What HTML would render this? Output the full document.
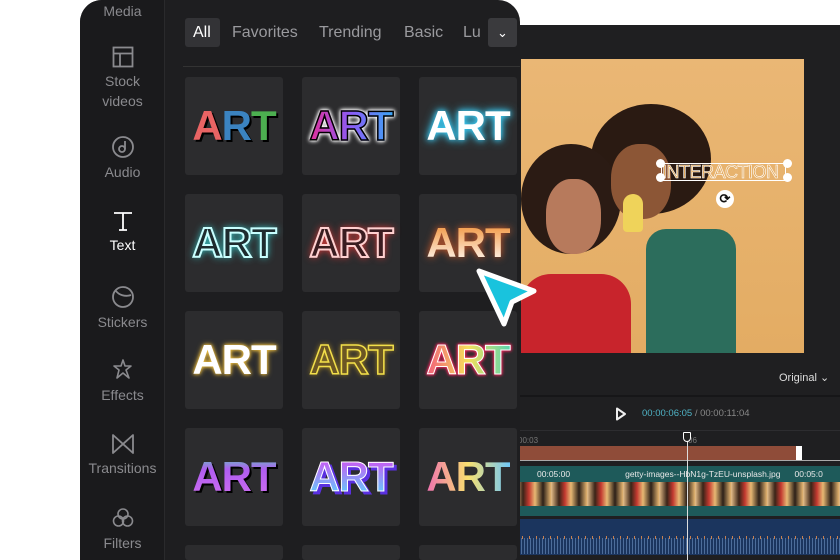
<!DOCTYPE html>
<html><head><meta charset="utf-8"><style>
*{margin:0;padding:0;box-sizing:border-box}
body{width:840px;height:560px;overflow:hidden;background:#fff;font-family:"Liberation Sans",sans-serif;position:relative}
.ed{position:absolute;left:500px;top:25px;width:340px;height:535px;background:#1f1f21}
.photo{position:absolute;left:521px;top:59px;width:283px;height:294px;background:linear-gradient(180deg,#eab775,#e3ac63);overflow:hidden}
.panel{position:absolute;left:80px;top:0;width:440px;height:560px;background:#1e1e20;border-radius:22px 22px 0 0;overflow:hidden}
.side{position:absolute;left:0;top:0;width:85px;height:560px;background:#1a1a1c;border-right:1px solid #2a2a2c}
.si{position:absolute;left:0;width:85px;text-align:center;color:#8a8a8e;font-size:14px;line-height:20px}
.si svg{display:block;margin:0 auto 3px}
.tabs{position:absolute;left:105px;top:18px;font-size:16px;color:#9a9a9e}
.tabs span{position:absolute;top:0;white-space:nowrap;line-height:29px}
.cell{position:absolute;width:98px;height:98px;background:#2c2c2e;border-radius:3px;text-align:center;font-weight:bold;font-size:42px;line-height:98px;font-family:"Liberation Sans",sans-serif;letter-spacing:-1px}
.g{-webkit-background-clip:text;background-clip:text;color:transparent}
</style></head><body>
<div class="ed"></div>
<div class="photo">
 <div style="position:absolute;left:70px;top:45px;width:120px;height:110px;border-radius:50%;background:#2a1a12"></div>
 <div style="position:absolute;left:0;top:85px;width:100px;height:110px;border-radius:50%;background:#2b1b14"></div>
 <div style="position:absolute;left:90px;top:85px;width:60px;height:75px;border-radius:45%;background:#8c5636"></div>
 <div style="position:absolute;left:25px;top:120px;width:55px;height:75px;border-radius:45%;background:#b77a5c"></div>
 <div style="position:absolute;left:125px;top:170px;width:90px;height:124px;background:#2c6d5c;border-radius:20px 20px 0 0"></div>
 <div style="position:absolute;left:0;top:215px;width:110px;height:80px;background:#c8242c;border-radius:30px 30px 0 0"></div>
 <div style="position:absolute;left:102px;top:135px;width:20px;height:38px;background:#efd35a;border-radius:10px 10px 4px 4px"></div>
 <div style="position:absolute;left:140px;top:104px;width:125px;height:18px;border:1px solid #fff;color:#e3a95c;font-size:18px;line-height:16px;-webkit-text-stroke:.6px #fff;letter-spacing:-0.5px">INTERACTION</div>
 <div style="position:absolute;left:135px;top:100px;width:9px;height:9px;border-radius:50%;background:#fff"></div>
 <div style="position:absolute;left:135px;top:114px;width:9px;height:9px;border-radius:50%;background:#fff"></div>
 <div style="position:absolute;left:262px;top:100px;width:9px;height:9px;border-radius:50%;background:#fff"></div>
 <div style="position:absolute;left:262px;top:114px;width:9px;height:9px;border-radius:50%;background:#fff"></div>
 <div style="position:absolute;left:195px;top:131px;width:18px;height:18px;border-radius:50%;background:#fff;color:#111;font-size:13px;text-align:center;line-height:18px;font-weight:bold">⟳</div>
</div>
<div style="position:absolute;left:779px;top:371px;color:#ddd;font-size:11px">Original ⌄</div>
<div style="position:absolute;left:500px;top:395px;width:340px;height:2px;background:#161618"></div>
<svg style="position:absolute;left:615px;top:407px" width="12" height="14"><path d="M2 1.5 L10 7 L2 12.5 Z" fill="none" stroke="#eee" stroke-width="2" stroke-linejoin="round"/></svg>
<div style="position:absolute;left:642px;top:408px;font-size:9.5px;color:#888"><span style="color:#4fb3c6">00:00:06:05</span> / 00:00:11:04</div>
<div style="position:absolute;left:500px;top:430px;width:340px;height:1px;background:#2d2d30"></div>
<div style="position:absolute;left:518px;top:436px;font-size:8px;color:#777">00:03</div>
<div style="position:absolute;left:688px;top:436px;font-size:8px;color:#777">06</div>
<div style="position:absolute;left:515px;top:446px;width:287px;height:14px;background:#8f4c39"></div>
<div style="position:absolute;left:796px;top:446px;width:6px;height:14px;background:#fff"></div>
<div style="position:absolute;left:515px;top:460px;width:325px;height:1px;background:#aaa"></div>
<div style="position:absolute;left:515px;top:466px;width:325px;height:50px;background:#1e5a5a"></div>
<div style="position:absolute;left:537px;top:469px;font-size:8.5px;color:#e8e8e8;white-space:nowrap">00:05:00<span style="margin-left:55px">getty-images--HbN1g-TzEU-unsplash.jpg</span><span style="margin-left:14px">00:05:0</span></div>
<div style="position:absolute;left:515px;top:482px;width:325px;height:24px;background:repeating-linear-gradient(90deg,#e8c08a 0,#3a2418 8px,#c33a30 14px,#e7b873 20px,#2c2018 28px,#e4b470 36px)"></div>
<div style="position:absolute;left:515px;top:519px;width:325px;height:36px;background:#1b355e"></div>
<div style="position:absolute;left:515px;top:538px;width:325px;height:16px;background:repeating-linear-gradient(90deg,#4d6d9a 0,#4d6d9a 1px,transparent 1px,transparent 3px)"></div>
<div style="position:absolute;left:515px;top:536px;width:325px;height:3px;background:repeating-linear-gradient(90deg,#c88050 0,#c88050 1px,transparent 1px,transparent 7px)"></div>
<div style="position:absolute;left:687px;top:433px;width:1px;height:127px;background:#ddd"></div>
<div style="position:absolute;left:683px;top:432px;width:8px;height:10px;border:1.5px solid #fff;border-radius:1px 1px 4px 4px;background:#222"></div>

<div class="panel">
 <div class="side">
  <div class="si" style="top:1px;">Media</div>
  <div class="si" style="top:46px"><svg width="22" height="22"><rect x="1.5" y="1.5" width="19" height="19" fill="none" stroke="#8a8a8e" stroke-width="1.8"/><path d="M1.5 7.5H20.5M8 7.5V20.5" stroke="#8a8a8e" stroke-width="1.8"/></svg>Stock<br>videos</div>
  <div class="si" style="top:135px"><svg width="24" height="24"><circle cx="12" cy="12" r="10" fill="none" stroke="#8a8a8e" stroke-width="1.8"/><circle cx="11" cy="14" r="3" fill="none" stroke="#8a8a8e" stroke-width="1.8"/><path d="M14 14V6" stroke="#8a8a8e" stroke-width="1.8"/></svg>Audio</div>
  <div class="si" style="top:210px;color:#fff"><svg width="22" height="22"><path d="M2 3H20M11 3V20M7 20H15" stroke="#fff" stroke-width="1.8" fill="none"/></svg>Text</div>
  <div class="si" style="top:285px"><svg width="24" height="24"><circle cx="12" cy="12" r="10" fill="none" stroke="#8a8a8e" stroke-width="1.8"/><path d="M5 6 C8 10 14 12 20 10" stroke="#8a8a8e" stroke-width="1.8" fill="none"/></svg>Stickers</div>
  <div class="si" style="top:358px"><svg width="24" height="24"><path d="M12 2 L14 8 L20 8 L15 12 L18 20 L12 15 L6 20 L8 12 L3 8 L10 8 Z" fill="none" stroke="#8a8a8e" stroke-width="1.6" stroke-linejoin="round"/></svg>Effects</div>
  <div class="si" style="top:433px"><svg width="24" height="22"><path d="M2 2 L22 20 V2 L2 20 Z" fill="none" stroke="#8a8a8e" stroke-width="1.8" stroke-linejoin="round"/></svg>Transitions</div>
  <div class="si" style="top:506px"><svg width="24" height="24"><circle cx="12" cy="8" r="5" fill="none" stroke="#8a8a8e" stroke-width="1.6"/><circle cx="7.5" cy="15" r="5" fill="none" stroke="#8a8a8e" stroke-width="1.6"/><circle cx="16.5" cy="15" r="5" fill="none" stroke="#8a8a8e" stroke-width="1.6"/></svg>Filters</div>
 </div>
 <div style="position:absolute;left:105px;top:18px;width:35px;height:29px;background:#333336;border-radius:3px"></div>
 <div class="tabs"><span style="left:8px;color:#fff">All</span><span style="left:47px">Favorites</span><span style="left:134px">Trending</span><span style="left:219px">Basic</span><span style="left:278px">Lu</span></div>
 <div style="position:absolute;left:408px;top:18px;width:29px;height:29px;background:#3a3a3d;border-radius:3px;color:#fff;text-align:center;line-height:29px;font-size:13px">⌄</div>
 <div style="position:absolute;left:103px;top:66px;width:337px;height:1px;background:#333"></div>

 <div class="cell" style="left:105px;top:77px;text-shadow:2px 2px 0 #000"><span style="color:#e96464">A</span><span style="color:#3b83c0">R</span><span style="color:#4caf50">T</span></div>
 <div class="cell" style="left:222px;top:77px"><span class="g" style="background-image:linear-gradient(90deg,#e02f9a,#8b5cf6,#3aa5f5);-webkit-text-stroke:1.5px #000;filter:drop-shadow(0 0 2px #fff) drop-shadow(0 0 1px #fff)">ART</span></div>
 <div class="cell" style="left:339px;top:77px;color:#fff;text-shadow:0 0 6px #3cd4ff,0 0 10px #3cd4ff">ART</div>
 <div class="cell" style="left:105px;top:194px;color:#1e2b2e;-webkit-text-stroke:2px #c8ffff;text-shadow:0 0 8px #3be0e0">ART</div>
 <div class="cell" style="left:222px;top:194px;color:#3a1c20;-webkit-text-stroke:2px #ffd0d0;text-shadow:0 0 8px #ff3b3b">ART</div>
 <div class="cell" style="left:339px;top:194px"><span class="g" style="background-image:linear-gradient(180deg,#f08a2a,#fff);filter:drop-shadow(0 0 4px #e0602a)">ART</span></div>
 <div class="cell" style="left:105px;top:311px;color:#fff;text-shadow:0 0 6px #f0c040,0 0 3px #f0c040">ART</div>
 <div class="cell" style="left:222px;top:311px;color:#6b5624;-webkit-text-stroke:1.5px #f2df4a;text-shadow:0 0 6px #c8a020">ART</div>
 <div class="cell" style="left:339px;top:311px"><span class="g" style="background-image:linear-gradient(90deg,#f25b7a,#f6e05a,#5ad6b0);-webkit-text-stroke:1px #fff;filter:drop-shadow(0 0 1.5px #e8245a) drop-shadow(0 0 1px #e8245a)">ART</span></div>
 <div class="cell" style="left:105px;top:428px"><span class="g" style="background-image:linear-gradient(180deg,#4ee0b0 0,#b05cf0 35%,#d070f0);filter:drop-shadow(2px 2px 0 #000)">ART</span></div>
 <div class="cell" style="left:222px;top:428px"><span class="g" style="background-image:linear-gradient(180deg,#e040f0,#50e0ff);-webkit-text-stroke:1px #fff;filter:drop-shadow(3px 3px 0 #5a30e0)">ART</span></div>
 <div class="cell" style="left:339px;top:428px"><span class="g" style="background-image:linear-gradient(90deg,#f070b0,#f8e070,#70c8f8)">ART</span></div>
 <div class="cell" style="left:105px;top:545px;height:15px"></div><div class="cell" style="left:222px;top:545px;height:15px"></div><div class="cell" style="left:339px;top:545px;height:15px"></div>
</div>
<svg style="position:absolute;left:472px;top:264px" width="70" height="66"><path d="M7 7 L62 27 L40 38 L32 60 Z" fill="#19c3dd" stroke="#fff" stroke-width="5" stroke-linejoin="round"/></svg>
</body></html>
